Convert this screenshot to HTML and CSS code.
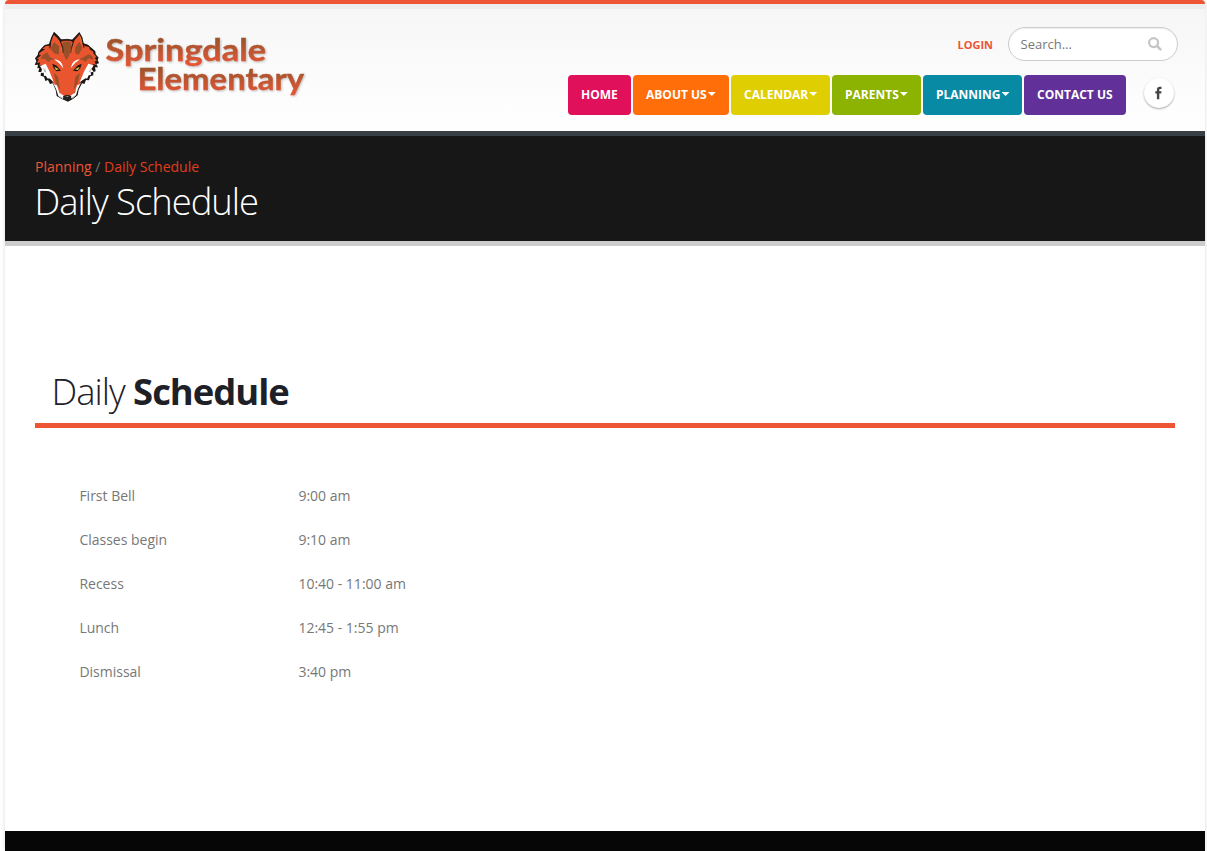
FILE: index.html
```html
<!DOCTYPE html>
<html lang="en">
<head>
<meta charset="utf-8">
<title>Daily Schedule - Springdale Elementary</title>
<link rel="stylesheet" href="styles.css">
</head>
<body>
<div class="page">
  <header class="header">
    <svg class="logo" viewBox="0 0 280 80" role="img" aria-label="Springdale Elementary">
      <defs>
        <linearGradient id="g1" gradientUnits="userSpaceOnUse" x1="0" y1="12" x2="0" y2="41"><stop offset="0" stop-color="#9a532b"/><stop offset="1" stop-color="#ec5636"/></linearGradient>
        <linearGradient id="g2" gradientUnits="userSpaceOnUse" x1="0" y1="41" x2="0" y2="71"><stop offset="0" stop-color="#9a532b"/><stop offset="1" stop-color="#ec5636"/></linearGradient>
      </defs>
      <g transform="scale(.33333)">
        <path fill="#1d1714" d="M78 17 L70 33 63 54 50 57 41 66 31 78 29 87 21 97 25 105 20 117 30 116 28 127 34 126 31 138 39 138 38 149 48 152 52 165 60 162 66 174 74 172 83 192 86 210 100 218 120 227 136 218 149 208 152 191 162 172 169 174 174 162 183 163 187 151 196 148 196 138 203 136 201 124 210 124 205 114 213 112 209 101 212 95 203 85 202 76 191 66 180 56 167 52 163 34 154 18 141 32 132 41 99 40 92 31Z"/>
        <path fill="#e9552f" d="M77 26 L69 48 66 59 53 60 43 69 52 69 34 81 34 88 40 87 26 99 33 100 26 112 36 109 34 119 42 116 40 128 51 120 72 164 93 199 100 210 134 210 144 193 160 164 181 121 194 125 194 114 204 117 200 106 207 105 200 95 206 94 196 82 196 77 185 70 184 64 165 58 159 34 154 25 145 36 133 49 128 44 104 44 99 49 89 37Z"/>
        <path fill="#99502a" d="M78 48 L67 69 80 83 93 85 93 60Z M154 47 L142 64 141 82 152 86 163 66Z M105 47 L127 47 131 62 127 80 118 100 113 100 105 80 101 62Z M45 86 L37 99 50 98 61 108 70 101 82 101 65 92 58 79Z M183 84 L168 93 150 101 164 101 172 108 181 97 196 101 194 92Z M78 140 L90 152 96 192 83 170Z M156 140 L142 152 137 192 149 170Z"/>
        <path fill="none" stroke="#1d1714" stroke-width="3" d="M81 25 L96 44 104 64 105 80 M152 26 L138 42 132 61 129 80 M68 51 L65 67 M165 51 L168 65 M100 43 Q116 37 133 43"/>
        <path fill="none" stroke="#dc9633" stroke-width="2" d="M101 65 L102 79 M133 65 L131 79 M156 32 L161 51"/>
        <path fill="#fff" d="M36 120 L53 113 64 135 77 168 63 156 60 159 53 149 48 150 47 140 39 141 42 130Z M197 118 L181 113 169 135 155 168 174 156 177 159 182 148 189 147 188 139 197 137 190 129Z M72 166 Q79 178 87 178 L94 200 109 210 104 219 91 210 84 188Z M161 166 Q154 178 147 178 L141 200 126 210 132 218 144 208 150 188Z"/>
        <path fill="#b5b6b8" d="M45 125 L49 137 55 140 53 131Z M188 127 L182 139 188 138Z M94 209 L105 215 103 218Z M141 207 L131 215 135 216Z"/>
        <path fill="#fff" d="M78 100 Q103 101 106 127 Q96 111 78 100Z M156 100 Q132 101 128 127 Q138 111 156 100Z"/>
        <path fill="#1d1714" d="M73 113 L86 119 99 134 86 136 77 127Z M161 113 L148 119 135 134 148 136 157 127Z"/>
        <path fill="#e5c83f" d="M79 122 L93 130 84 132Z M155 122 L141 130 150 132Z"/>
        <path fill="#24211f" d="M105 210 L118 206 130 210 128 220 119 224 108 220Z"/>
        <path fill="#858585" d="M111 210 H123 L119 214Z"/>
      </g>
      <g class="wordmark">
        <text x="77.500" y="34.700" textLength="160.500" lengthAdjust="spacingAndGlyphs" fill="url(#g1)" stroke="url(#g1)">Springdale</text>
        <text x="109.500" y="63.700" textLength="166.500" lengthAdjust="spacingAndGlyphs" fill="url(#g2)" stroke="url(#g2)">Elementary</text>
      </g>
    </svg>
    <div class="tools">
      <div class="top-row">
        <a class="login">LOGIN</a>
        <div class="search"><span>Search...</span>
          <svg width="14" height="14" viewBox="0 0 14 14" fill="none" stroke="#c5c5c5"><circle cx="5.600" cy="5.600" r="4.500" stroke-width="2.200"/><path d="M9 9l3.400 3.400" stroke-width="2.500" stroke-linecap="round"/></svg>
        </div>
      </div>
      <div class="nav-row">
        <nav class="nav">
          <a class="home">HOME</a>
          <a class="about">ABOUT US<i></i></a>
          <a class="calendar">CALENDAR<i></i></a>
          <a class="parents">PARENTS<i></i></a>
          <a class="planning">PLANNING<i></i></a>
          <a class="contact">CONTACT US</a>
        </nav>
        <a class="social" aria-label="Facebook"><svg width="8" height="14" viewBox="0 0 8 14"><path fill="#444" d="M6.500.8V3H5.300C4.500 3 4.300 3.400 4.300 4V5.200H6.500L6.200 7.500H4.300V13.300H1.900V7.500H.3V5.200H1.900V3.700C1.900 1.800 3 .7 4.900.7Z"/></svg></a>
      </div>
    </div>
  </header>
  <section class="page-top">
    <div class="crumbs"><a>Planning</a> <span>/</span> <a class="current">Daily Schedule</a></div>
    <h1>Daily Schedule</h1>
  </section>
  <main class="main">
    <h2>Daily <strong>Schedule</strong></h2>
    <dl class="schedule">
      <dt>First Bell</dt><dd>9:00 am</dd>
      <dt>Classes begin</dt><dd>9:10 am</dd>
      <dt>Recess</dt><dd>10:40 - 11:00 am</dd>
      <dt>Lunch</dt><dd>12:45 - 1:55 pm</dd>
      <dt>Dismissal</dt><dd>3:40 pm</dd>
    </dl>
  </main>
  <footer class="footer"></footer>
</div>
</body>
</html>
```
FILE: styles.css
```css
* { box-sizing: border-box; }
body { margin: 0; background: #fff; overflow: hidden; font-family: "Open Sans", sans-serif; font-size: 14px; color: #777; }
.page { width: 1200px; height: 851px; margin-left: 5px; display: flex; flex-direction: column; box-shadow: 0 0 4px rgba(0,0,0,.15); border-radius: 4px 4px 0 0; }
.header { height: 131px; border-top: 4px solid #ed5535; border-radius: 4px 4px 0 0; background: linear-gradient(#ededed 5px, #f6f6f6 5px, #fefefe 110px); display: flex; justify-content: space-between; padding: 22px 27px 0 23px; }
.logo { width: 280px; height: 80px; overflow: visible; }
.wordmark { font-family: Lato, sans-serif; font-weight: 700; font-size: 30px; stroke-width: .4px; filter: drop-shadow(1px 1px 1px rgba(0,0,0,.25)); }
.tools { display: flex; flex-direction: column; align-items: flex-end; gap: 14px; padding-top: 1px; }
.top-row { display: flex; align-items: center; gap: 15px; }
.login { color: #ed5535; font-size: 11px; font-weight: 700; }
.search { width: 170px; height: 34px; border: 1px solid #ccc; border-radius: 17px; background: #fff; box-shadow: inset 0 1px 1px rgba(0,0,0,.075); display: flex; align-items: center; justify-content: space-between; padding: 0 15px 0 11.500px; font-size: 13px; color: #777; }
.nav-row { display: flex; align-items: center; gap: 18px; padding-right: 4px; }
.nav { display: flex; gap: 2px; }
.nav a { height: 40px; border-radius: 4px; color: #fff; font-size: 12px; font-weight: 700; display: flex; align-items: center; padding: 0 0 2px 13px; white-space: nowrap; }
.nav i { width: 8px; height: 4px; background: #fff; clip-path: polygon(0 0, 100% 0, 50% 100%); margin-left: 1px; }
.home { width: 63px; background: #e0105b; }
.about { width: 96px; background: #ff6e09; }
.calendar { width: 99px; background: #dfce02; }
.parents { width: 89px; background: #8cb202; }
.planning { width: 99px; background: #098aa4; }
.contact { width: 102px; background: #613199; }
.social { width: 30px; height: 30px; margin-bottom: 4px; border-radius: 50%; background: #fff; box-shadow: 0 1px 2px rgba(0,0,0,.35); display: flex; align-items: center; justify-content: center; }
.page-top { height: 115px; background: #171717; border-top: 5px solid #384045; border-bottom: 5px solid #ccc; padding: 20px 30px 0; }
.crumbs { line-height: 22px; color: #777; }
.crumbs a { color: #ed5535; }
.crumbs .current { color: #e03d1b; }
h1 { margin: 2px 0 0 -.5px; color: #fff; font-size: 36.400px; font-weight: 300; line-height: 42px; letter-spacing: -1px; }
.main { height: 585px; padding: 117px 30px 0; }
h2 { height: 65px; margin: 0; padding: 6px 0 0 16.500px; border-bottom: 5px solid #ed5535; font-size: 36.400px; font-weight: 300; line-height: 44px; letter-spacing: -1px; color: #1d2127; }
h2 strong { font-weight: 700; }
.schedule { display: grid; grid-template-columns: 219px 300px; grid-auto-rows: 44px; align-items: center; margin: 45px 0 0 44.400px; }
.schedule dd { margin: 0; }
.footer { height: 20px; background: #060606; }
```
